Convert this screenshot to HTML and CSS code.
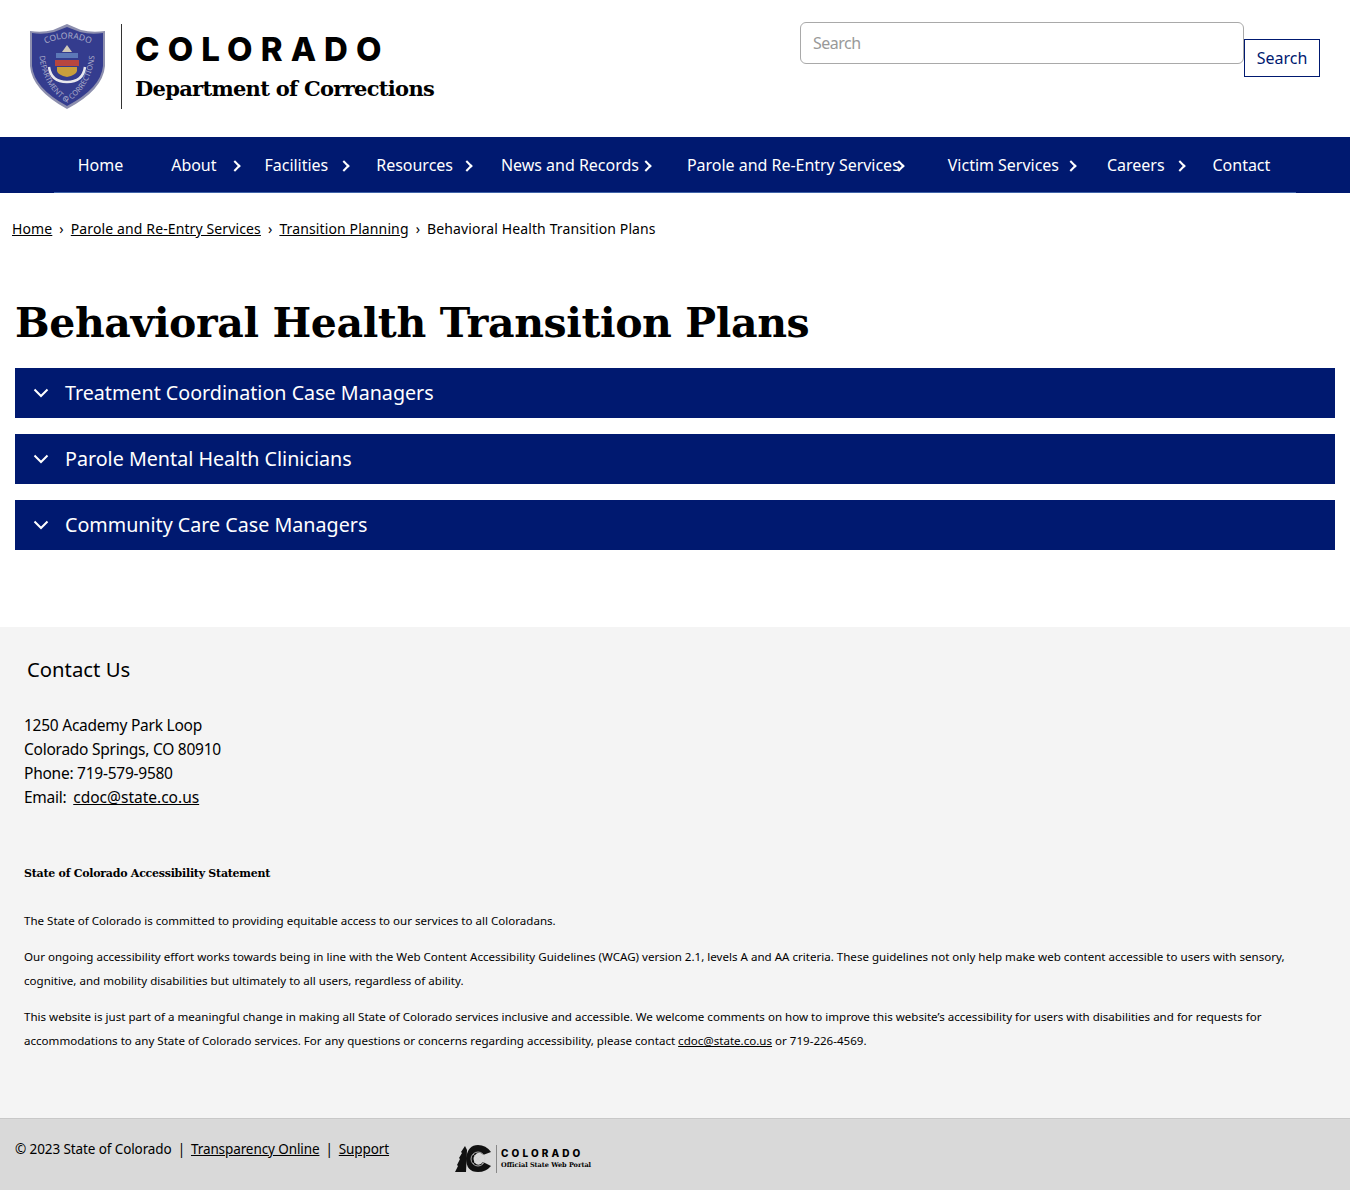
FILE: index.html
```html
<!DOCTYPE html>
<html lang="en">
<head>
    <meta charset="UTF-8">
    <meta name="viewport" content="width=device-width, initial-scale=1.0">
    <title>Behavioral Health Transition Plans</title>
    <link rel="stylesheet" href="styles.css">
</head>
<body>
    <header class="site-header">
        <a class="logo" href="#">
            <svg class="shield" viewBox="0 0 76 86" width="76" height="86" aria-hidden="true">
                <defs>
                    <path id="ring-top" d="M10 23 Q38 6 66 23"/>
                    <path id="ring-bottom" d="M9 20 Q8 60 37 79 Q66 60 65 20"/>
                </defs>
                <path d="M37 0 L51 6 Q62 9 75 7 L75 42 Q73 66 37 85 Q2 66 0 42 L0 7 Q12 9 23 6 Z" fill="#8d8fae"/>
                <path d="M37 3 L50 8 Q61 11 73 9 L73 42 Q71 64 37 82 Q4 64 2 42 L2 9 Q13 11 24 8 Z" fill="#343c8e"/>
                <text class="shield-text"><textPath href="#ring-top" startOffset="50%" text-anchor="middle">COLORADO</textPath></text>
                <text class="shield-text small"><textPath href="#ring-bottom" startOffset="50%" text-anchor="middle">DEPARTMENT OF CORRECTIONS</textPath></text>
                <path d="M37 21 L42 28 L32 28 Z" fill="#cfc8b8"/>
                <rect x="26" y="29" width="22" height="5" fill="#5c78b8"/>
                <rect x="25" y="36" width="24" height="6" fill="#b8463f"/>
                <path d="M27 43 H47 V47 Q46 51 37 53 Q28 51 27 47 Z" fill="#c99f3c"/>
                <path d="M19 43 Q21 58 37 58 Q53 58 55 43" fill="none" stroke="#e8e8ee" stroke-width="2.500"/>
            </svg>
            <span class="logo-text">
                <span class="logo-state">COLORADO</span>
                <span class="logo-dept">Department of Corrections</span>
            </span>
        </a>
        <form class="search">
            <input class="search-input" type="text" placeholder="Search">
            <button class="search-btn" type="button">Search</button>
        </form>
    </header>

    <nav class="main-nav">
        <ul class="nav-list">
            <li class="nav-item"><a href="#">Home</a></li>
            <li class="nav-item has-sub"><a href="#">About</a></li>
            <li class="nav-item has-sub"><a href="#">Facilities</a></li>
            <li class="nav-item has-sub"><a href="#">Resources</a></li>
            <li class="nav-item has-sub"><a href="#">News and Records</a></li>
            <li class="nav-item has-sub"><a href="#">Parole and Re-Entry Services</a></li>
            <li class="nav-item has-sub"><a href="#">Victim Services</a></li>
            <li class="nav-item has-sub"><a href="#">Careers</a></li>
            <li class="nav-item"><a href="#">Contact</a></li>
        </ul>
    </nav>

    <div class="breadcrumb">
        <a href="#">Home</a><span class="crumb-sep">›</span><a href="#">Parole and Re-Entry Services</a><span class="crumb-sep">›</span><a href="#">Transition Planning</a><span class="crumb-sep">›</span><span>Behavioral Health Transition Plans</span>
    </div>

    <main class="content">
        <h1>Behavioral Health Transition Plans</h1>
        <div class="accordion">
            <svg class="chevron" viewBox="0 0 16 10" width="16" height="10" aria-hidden="true"><path d="M1.500 1.500 L8 8 L14.500 1.500" fill="none" stroke="#fff" stroke-width="2"/></svg>
            <span class="accordion-label">Treatment Coordination Case Managers</span>
        </div>
        <div class="accordion">
            <svg class="chevron" viewBox="0 0 16 10" width="16" height="10" aria-hidden="true"><path d="M1.500 1.500 L8 8 L14.500 1.500" fill="none" stroke="#fff" stroke-width="2"/></svg>
            <span class="accordion-label">Parole Mental Health Clinicians</span>
        </div>
        <div class="accordion">
            <svg class="chevron" viewBox="0 0 16 10" width="16" height="10" aria-hidden="true"><path d="M1.500 1.500 L8 8 L14.500 1.500" fill="none" stroke="#fff" stroke-width="2"/></svg>
            <span class="accordion-label">Community Care Case Managers</span>
        </div>
    </main>

    <footer class="site-footer">
        <h2 class="contact-title">Contact Us</h2>
        <p class="contact">
            1250 Academy Park Loop<br>
            Colorado Springs, CO 80910<br>
            Phone: 719-579-9580<br>
            Email: <a href="#">cdoc@state.co.us</a>
        </p>
        <h3 class="access-title">State of Colorado Accessibility Statement</h3>
        <p class="access first">The State of Colorado is committed to providing equitable access to our services to all Coloradans.</p>
        <p class="access">Our ongoing accessibility effort works towards being in line with the Web Content Accessibility Guidelines (WCAG) version 2.1, levels A and AA criteria. These guidelines not only help make web content accessible to users with sensory, cognitive, and mobility disabilities but ultimately to all users, regardless of ability.</p>
        <p class="access">This website is just part of a meaningful change in making all State of Colorado services inclusive and accessible. We welcome comments on how to improve this website’s accessibility for users with disabilities and for requests for accommodations to any State of Colorado services. For any questions or concerns regarding accessibility, please contact <a href="#">cdoc@state.co.us</a> or 719-226-4569.</p>
    </footer>

    <div class="bottom-bar">
        <div class="legal">© 2023 State of Colorado<span class="pipe">|</span><a href="#">Transparency Online</a><span class="pipe">|</span><a href="#">Support</a></div>
        <div class="portal">
            <svg class="portal-mark" viewBox="0 0 36 28" width="36" height="28" aria-hidden="true">
                <path d="M0 27 L3 21 L2 20 L5 14 L4 13 L7 8 L6 7 L10 1 L12 5 L11 27 Z" fill="#111"/>
                <path d="M36 7 Q31 0 23 0 Q13 0 11 13 Q11 27 23 27 Q31 27 36 21 L28 17 Q25 21 21 19 Q16 14 21 9 Q25 6 28 10 Z" fill="#111"/>
                <circle cx="23" cy="14" r="7" fill="none" stroke="#d0d0d0" stroke-width="0.800"/>
                <path d="M18 9 L28 19 M28 9 L18 19" fill="none" stroke="#d0d0d0" stroke-width="0.600"/>
            </svg>
            <div class="portal-text">
                <span class="portal-state">COLORADO</span>
                <span class="portal-sub">Official State Web Portal</span>
            </div>
        </div>
    </div>
</body>
</html>
```

FILE: styles.css
```css
* {
    box-sizing: border-box;
}

body {
    margin: 0;
    background-color: #ffffff;
    color: #000000;
    font-family: "Noto Sans", sans-serif;
}

a {
    color: inherit;
}

ul {
    list-style: none;
    margin: 0;
    padding: 0;
}

.site-header {
    display: flex;
    justify-content: space-between;
    align-items: flex-start;
    height: 137px;
    padding: 22px 30px 0 30px;
}

.logo {
    display: flex;
    align-items: flex-start;
    margin-top: 2px;
    text-decoration: none;
    color: #000000;
}

.shield {
    display: block;
    margin-right: 15px;
}

.shield-text {
    fill: #a9abc9;
    font-family: "Noto Sans", sans-serif;
    font-size: 8.500px;
}

.shield-text.small {
    font-size: 7.500px;
}

.logo-text {
    display: flex;
    flex-direction: column;
    justify-content: center;
    height: 85px;
    padding-top: 2px;
    padding-left: 13px;
    border-left: 1px solid #333333;
}

.logo-state {
    font-family: "Inter", sans-serif;
    font-size: 33px;
    font-weight: 800;
    letter-spacing: 8.100px;
    line-height: 36px;
}

.logo-dept {
    margin-top: 6px;
    font-family: "DejaVu Serif", serif;
    font-size: 21px;
    font-weight: 700;
    line-height: 32px;
    letter-spacing: -0.700px;
}

.search {
    display: flex;
    align-items: flex-start;
}

.search-input {
    width: 444px;
    height: 42px;
    padding: 0 12px;
    border: 1px solid #a9a9a9;
    border-radius: 6px;
    font-family: "Noto Sans", sans-serif;
    font-size: 16px;
}

.search-input::placeholder {
    color: #999999;
    letter-spacing: -0.500px;
}

.search-btn {
    width: 76px;
    height: 38px;
    margin-top: 17px;
    padding: 0;
    background-color: #ffffff;
    border: 1px solid #001970;
    color: #001970;
    font-family: "Noto Sans", sans-serif;
    font-size: 16px;
}

.main-nav {
    height: 56px;
    background-color: #001970;
}

.nav-list {
    display: flex;
    justify-content: center;
    width: 1242px;
    height: 56px;
    margin: 0 auto;
    padding-right: 2px;
    border-bottom: 1px solid #3f63a8;
}

.nav-item {
    position: relative;
    flex: none;
    padding: 0 24px;
    height: 55px;
    line-height: 56px;
    font-size: 16px;
    letter-spacing: -0.020px;
    white-space: nowrap;
    color: #ffffff;
}

.nav-item a {
    text-decoration: none;
    color: #ffffff;
}

.has-sub::after {
    content: "";
    position: absolute;
    top: 25px;
    width: 6px;
    height: 6px;
    border-top: 2px solid #ffffff;
    border-right: 2px solid #ffffff;
    transform: rotate(45deg);
}

.nav-item:nth-child(2)::after { left: 83.500px; }
.nav-item:nth-child(3)::after { left: 99.500px; }
.nav-item:nth-child(4)::after { left: 110.500px; }
.nav-item:nth-child(5)::after { left: 165.500px; }
.nav-item:nth-child(6)::after { left: 232.500px; }
.nav-item:nth-child(7)::after { left: 143.500px; }
.nav-item:nth-child(8)::after { left: 93.500px; }

.breadcrumb {
    padding: 26px 12px 0 12px;
    font-size: 14px;
    letter-spacing: 0.120px;
    line-height: 20px;
}

.crumb-sep {
    margin: 0 7px;
}

.content {
    padding: 0 15px;
}

h1 {
    margin: 54px 0 15px 0;
    font-family: "DejaVu Serif", serif;
    font-size: 41px;
    font-weight: 700;
    letter-spacing: -0.400px;
    line-height: 60px;
}

.accordion {
    display: flex;
    align-items: center;
    height: 50px;
    margin-bottom: 16px;
    padding-left: 18px;
    background-color: #001970;
    color: #ffffff;
    font-size: 19.700px;
}

.accordion-label {
    padding-bottom: 2px;
}

.chevron {
    margin-right: 16px;
}

.site-footer {
    height: 491px;
    margin-top: 77px;
    padding: 0 24px;
    background-color: #f4f4f4;
}

.contact-title {
    margin: 0;
    padding: 29px 0 0 3px;
    font-size: 20.300px;
    font-weight: 400;
    line-height: 26px;
}

.contact {
    margin: 31px 0 0 0;
    font-size: 15.500px;
    letter-spacing: -0.250px;
    line-height: 24px;
}

.contact a {
    margin-left: 3px;
    letter-spacing: 0;
}

.access-title {
    margin: 53px 0 0 0;
    font-family: "DejaVu Serif", serif;
    font-size: 11px;
    font-weight: 700;
    letter-spacing: -0.250px;
    line-height: 24px;
}

.access {
    margin: 12px 0 0 0;
    font-size: 11.570px;
    line-height: 24px;
}

.access.first {
    margin-top: 23px;
}

.bottom-bar {
    display: flex;
    height: 72px;
    border-top: 1px solid #c8c8c8;
    background-color: #d9d9d9;
    padding: 0 15px;
}

.legal {
    padding-top: 20px;
    font-size: 13.500px;
    letter-spacing: -0.100px;
    line-height: 20px;
}

.pipe {
    margin: 0 6px;
}

.portal {
    display: flex;
    align-items: center;
    margin: 26px 0 0 66px;
    height: 28px;
}

.portal-mark {
    margin-right: 5px;
}

.portal-text {
    display: flex;
    flex-direction: column;
    height: 28px;
    padding-left: 4px;
    border-left: 1px solid #888888;
    justify-content: center;
}

.portal-state {
    font-family: "Inter", sans-serif;
    font-size: 10px;
    font-weight: 800;
    letter-spacing: 3.100px;
    line-height: 13px;
}

.portal-sub {
    font-family: "DejaVu Serif", serif;
    font-size: 6.500px;
    font-weight: 700;
    line-height: 11px;
}
```
